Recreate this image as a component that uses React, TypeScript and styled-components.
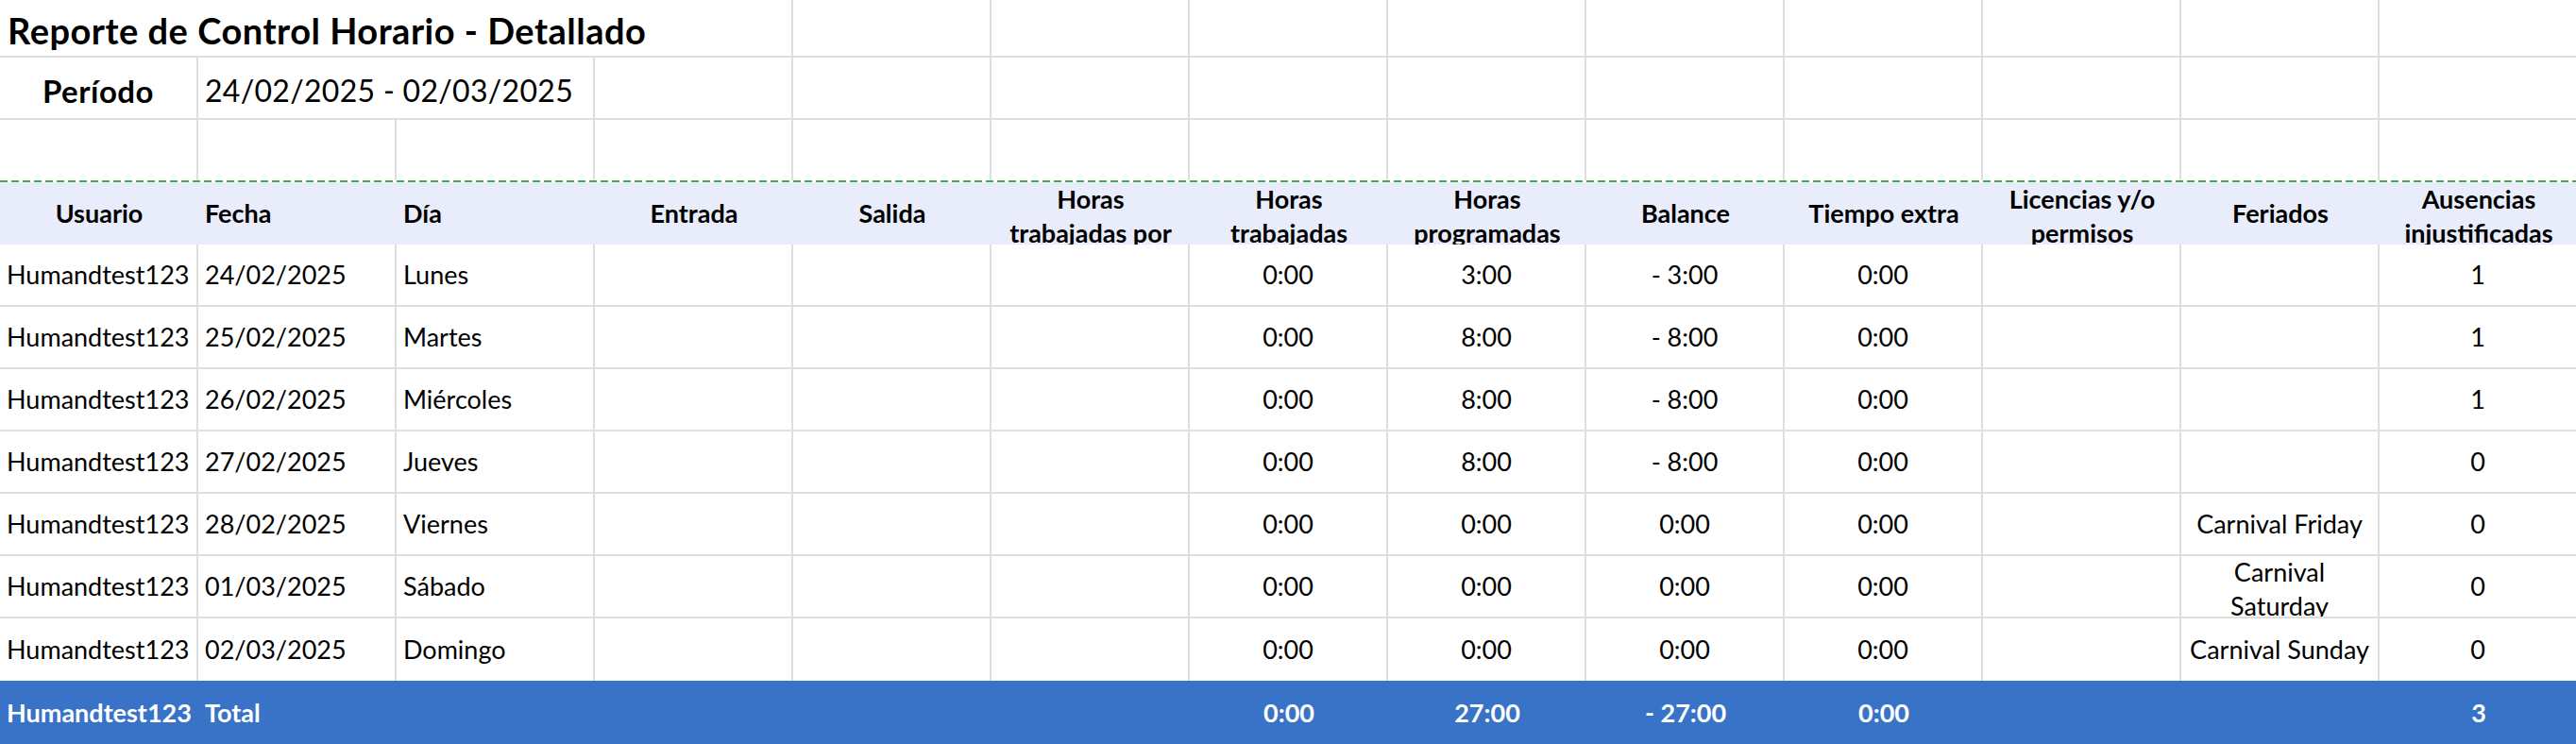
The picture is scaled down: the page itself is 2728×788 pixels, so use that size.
import React from 'react'
import styled, { createGlobalStyle } from 'styled-components'

const GlobalStyle = createGlobalStyle`
	html, body {
		margin: 0;
		padding: 0;
		background: #ffffff;
		overflow: hidden;
	}
	body {
		font-family: 'Lato', 'Noto Sans', sans-serif;
		color: #000000;
	}
`

const COL_W = 210
const LINE = '#dedede'

const Sheet = styled.div`
	width: ${COL_W * 13}px;
	display: flex;
	flex-direction: column;
`

const Row = styled.div<{ $h: number; $bg?: string }>`
	display: grid;
	grid-template-columns: repeat(13, ${COL_W}px);
	height: ${(p) => p.$h}px;
	background: ${(p) => p.$bg ?? 'transparent'};
`

const Cell = styled.div<{
	$span?: number
	$center?: boolean
	$right?: boolean
	$bottom?: boolean
	$multi?: boolean
}>`
	grid-column: span ${(p) => p.$span ?? 1};
	box-sizing: border-box;
	display: flex;
	align-items: center;
	justify-content: ${(p) => (p.$center ? 'center' : 'flex-start')};
	text-align: ${(p) => (p.$center ? 'center' : 'left')};
	padding: ${(p) => (p.$multi ? '5px' : '0')} 7px 0;
	overflow: hidden;
	white-space: nowrap;
	font-size: 27px;
	line-height: 36px;
	border-right: ${(p) => (p.$right ? `2px solid ${LINE}` : 'none')};
	border-bottom: ${(p) => (p.$bottom ? `2px solid ${LINE}` : 'none')};
`

const Title = styled(Cell)`
	font-size: 38px;
	font-weight: 700;
	letter-spacing: 0.5px;
	padding-left: 8px;
	padding-top: 4px;
`

const PeriodLabel = styled(Cell)`
	font-size: 33px;
	font-weight: 700;
	letter-spacing: 0.5px;
	padding-top: 6px;
`

const PeriodValue = styled(Cell)`
	font-size: 32px;
	letter-spacing: 0.3px;
	padding-top: 6px;
`

const Marquee = styled.div`
	height: 2px;
	background-image: repeating-linear-gradient(
		90deg,
		#3fae4f 0 8px,
		transparent 8px 12px
	);
`

const HeadCell = styled(Cell)`
	font-weight: 700;
`

const TotalCell = styled(Cell)`
	color: #ffffff;
	font-weight: 700;
`

type Value = string | string[]

const Lines = ({ v }: { v: Value }) =>
	Array.isArray(v) ? (
		<span>
			{v.map((l, i) => (
				<React.Fragment key={i}>
					{i > 0 && <br />}
					{l}
				</React.Fragment>
			))}
		</span>
	) : (
		<>{v}</>
	)

const headers: Value[] = [
	'Usuario',
	'Fecha',
	'Día',
	'Entrada',
	'Salida',
	['Horas', 'trabajadas por'],
	['Horas', 'trabajadas'],
	['Horas', 'programadas'],
	'Balance',
	'Tiempo extra',
	['Licencias y/o', 'permisos'],
	'Feriados',
	['Ausencias', 'injustificadas'],
]

const leftCols = [0, 1, 2]

const rows: Value[][] = [
	['Humandtest123', '24/02/2025', 'Lunes', '', '', '', '0:00', '3:00', '- 3:00', '0:00', '', '', '1'],
	['Humandtest123', '25/02/2025', 'Martes', '', '', '', '0:00', '8:00', '- 8:00', '0:00', '', '', '1'],
	['Humandtest123', '26/02/2025', 'Miércoles', '', '', '', '0:00', '8:00', '- 8:00', '0:00', '', '', '1'],
	['Humandtest123', '27/02/2025', 'Jueves', '', '', '', '0:00', '8:00', '- 8:00', '0:00', '', '', '0'],
	['Humandtest123', '28/02/2025', 'Viernes', '', '', '', '0:00', '0:00', '0:00', '0:00', '', 'Carnival Friday', '0'],
	['Humandtest123', '01/03/2025', 'Sábado', '', '', '', '0:00', '0:00', '0:00', '0:00', '', ['Carnival', 'Saturday'], '0'],
	['Humandtest123', '02/03/2025', 'Domingo', '', '', '', '0:00', '0:00', '0:00', '0:00', '', 'Carnival Sunday', '0'],
]

const totals = ['Humandtest123', 'Total', '', '', '', '', '0:00', '27:00', '- 27:00', '0:00', '', '', '3']

const blanks = (n: number, bottom: boolean) =>
	Array.from({ length: n }, (_, i) => <Cell key={`b${i}`} $right $bottom={bottom} />)

export default function App() {
	return (
		<>
			<GlobalStyle />
			<Sheet>
				<Row $h={61}>
					<Title $span={4} $right $bottom>
						Reporte de Control Horario - Detallado
					</Title>
					{blanks(9, true)}
				</Row>
				<Row $h={66}>
					<PeriodLabel $center $right $bottom>
						Período
					</PeriodLabel>
					<PeriodValue $span={2} $right $bottom>
						24/02/2025 - 02/03/2025
					</PeriodValue>
					{blanks(10, true)}
				</Row>
				<Row $h={64}>{blanks(13, false)}</Row>
				<Marquee />
				<Row $h={66} $bg="#e9edfb">
					{headers.map((h, i) => (
						<HeadCell
							key={i}
							$center={i === 0 || !leftCols.includes(i)}
							$multi={Array.isArray(h)}
						>
							<Lines v={h} />
						</HeadCell>
					))}
				</Row>
				{rows.map((r, ri) => (
					<Row key={ri} $h={66}>
						{r.map((v, ci) => (
							<Cell
								key={ci}
								$center={!leftCols.includes(ci)}
								$multi={Array.isArray(v)}
								$right
								$bottom={ri < rows.length - 1}
							>
								<Lines v={v} />
							</Cell>
						))}
					</Row>
				))}
				<Row $h={67} $bg="#3873c8">
					{totals.map((v, ci) => (
						<TotalCell key={ci} $center={!leftCols.includes(ci)}>
							{v}
						</TotalCell>
					))}
				</Row>
			</Sheet>
		</>
	)
}
